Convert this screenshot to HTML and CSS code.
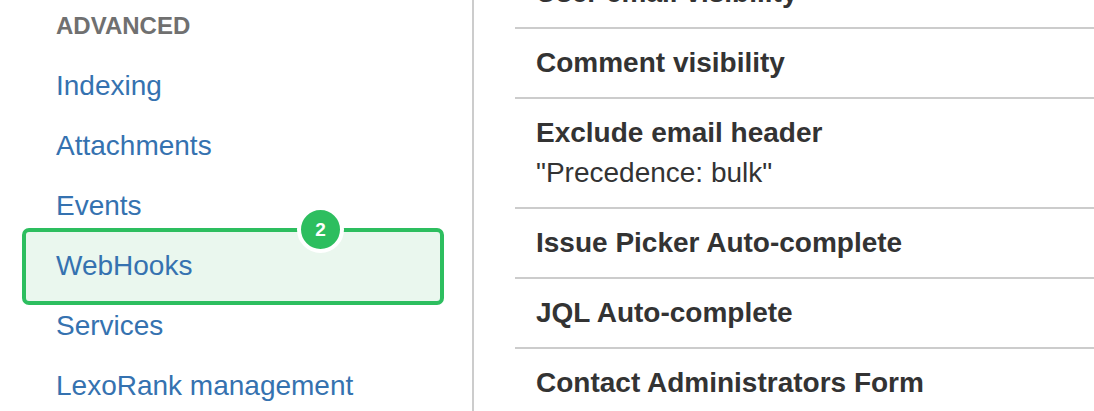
FILE: index.html
```html
<!DOCTYPE html>
<html>
<head>
<meta charset="utf-8">
<link rel="stylesheet" href="styles.css">
</head>
<body>
<div class="page">
  <nav class="sidebar">
    <h2 class="nav-heading">ADVANCED</h2>
    <ul class="nav-list">
      <li class="nav-item"><a class="nav-link" href="#">Indexing</a></li>
      <li class="nav-item"><a class="nav-link" href="#">Attachments</a></li>
      <li class="nav-item"><a class="nav-link" href="#">Events</a></li>
      <li class="nav-item is-highlighted">
        <span class="highlight"></span>
        <span class="badge">2</span>
        <a class="nav-link" href="#">WebHooks</a>
      </li>
      <li class="nav-item"><a class="nav-link" href="#">Services</a></li>
      <li class="nav-item"><a class="nav-link" href="#">LexoRank management</a></li>
    </ul>
  </nav>
  <main class="content">
    <ul class="settings">
      <li class="setting"><div class="setting-title">User email visibility</div></li>
      <li class="setting"><div class="setting-title">Comment visibility</div></li>
      <li class="setting"><div class="setting-title">Exclude email header</div><div class="setting-value">"Precedence: bulk"</div></li>
      <li class="setting"><div class="setting-title">Issue Picker Auto-complete</div></li>
      <li class="setting"><div class="setting-title">JQL Auto-complete</div></li>
      <li class="setting"><div class="setting-title">Contact Administrators Form</div></li>
    </ul>
  </main>
</div>
</body>
</html>
```

FILE: styles.css
```css
html, body {
  margin: 0;
  padding: 0;
  background: #fff;
  overflow: hidden;
}
body {
  font-family: "Liberation Sans", Arial, Helvetica, sans-serif;
  color: #333;
}
.page {
  display: flex;
  height: 411px;
  overflow: hidden;
}
.sidebar {
  width: 472px;
  flex: none;
  border-right: 2px solid #cccccc;
  padding-top: 6px;
  box-sizing: content-box;
}
.nav-heading {
  margin: 0 0 10px 56px;
  font-size: 24px;
  line-height: 40px;
  font-weight: bold;
  color: #707070;
}
.nav-list {
  list-style: none;
  margin: 0;
  padding: 0;
}
.nav-item {
  position: relative;
  padding: 10px 0 10px 56px;
  line-height: 40px;
  font-size: 28px;
}
.nav-link {
  position: relative;
  z-index: 2;
  color: #3572b0;
  text-decoration: none;
}
.highlight {
  position: absolute;
  z-index: 1;
  left: 22px;
  right: 28px;
  top: -8px;
  bottom: -9px;
  border: 4px solid #2dbe5f;
  border-radius: 7px;
  background: #eaf7ee;
}
.badge {
  position: absolute;
  z-index: 3;
  left: 297px;
  top: -30px;
  width: 39px;
  height: 39px;
  border: 4px solid #fff;
  border-radius: 50%;
  background: #2dbe5f;
  color: #fff;
  font-size: 19px;
  font-weight: bold;
  line-height: 39px;
  text-align: center;
}
.content {
  flex: 1;
  min-width: 0;
  padding-left: 41px;
}
.settings {
  list-style: none;
  margin: -43px 0 0 0;
  padding: 0;
}
.setting {
  border-top: 2px solid #cccccc;
  padding: 14px 0 14px 21px;
  font-size: 28px;
  line-height: 40px;
}
.setting:first-child {
  border-top: none;
  padding-top: 16px;
}
.setting-title {
  font-weight: bold;
  color: #333;
}
.setting-value {
  color: #333;
}
```
